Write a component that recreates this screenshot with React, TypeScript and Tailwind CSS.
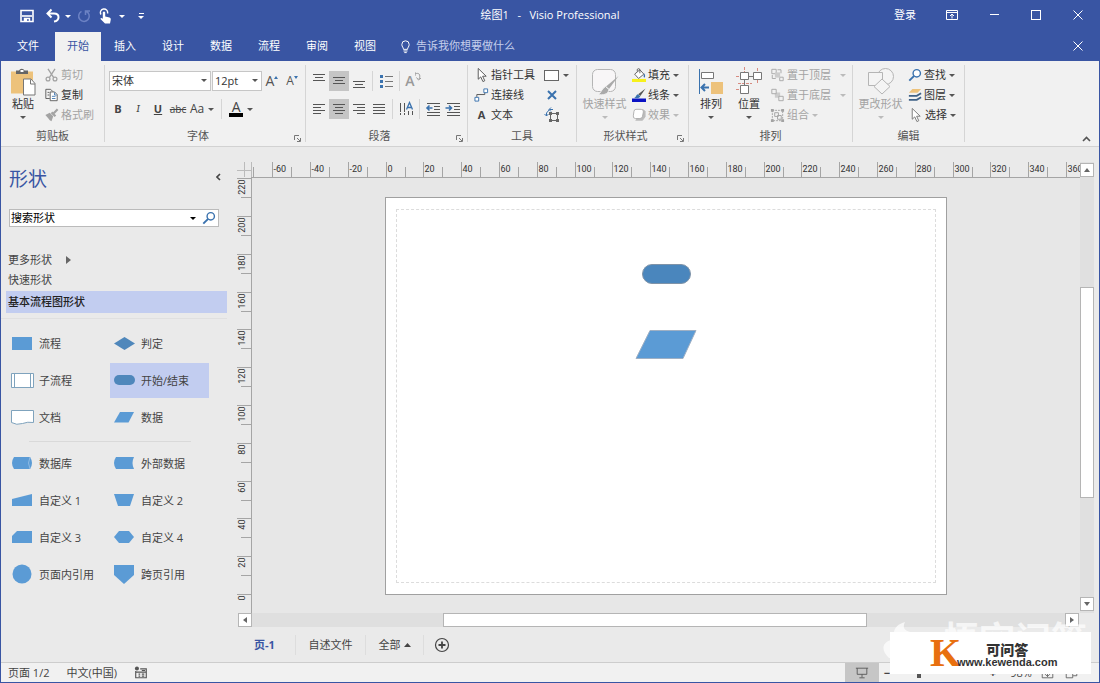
import type { ReactNode } from "react";

const tabs = ["插入", "设计", "数据", "流程", "审阅", "视图"];

function Caret({ className = "text-[#555]" }: { className?: string }) {
  return (
    <svg viewBox="0 0 6 3" className={`w-[6px] h-[3px] shrink-0 ${className}`}>
      <path d="M0 0h6L3 3z" fill="currentColor" />
    </svg>
  );
}

function Icon({ children, className = "w-4 h-4" }: { children: ReactNode; className?: string }) {
  return (
    <svg viewBox="0 0 16 16" fill="none" stroke="currentColor" className={`shrink-0 ${className}`}>
      {children}
    </svg>
  );
}

function CloseIcon() {
  return (
    <svg viewBox="0 0 10 10" className="w-[10px] h-[10px]" stroke="currentColor" fill="none">
      <path d="M0.5 0.5l9 9M9.5 0.5l-9 9" />
    </svg>
  );
}

function TitleBar() {
  return (
    <header className="grid grid-cols-[1fr_auto_1fr] items-center h-8 text-white">
      <div className="flex items-center pl-[18px]">
        <button aria-label="保存" className="w-4">
          <Icon>
            <path d="M2 2.5h12v11H2z" strokeWidth="1.6" />
            <path d="M3 8h10" strokeWidth="1.6" />
            <path d="M5.5 13v-2.500h5V13" strokeWidth="1.4" />
            <path d="M6 11h2v2H6z" fill="currentColor" stroke="none" />
          </Icon>
        </button>
        <button aria-label="撤消" className="flex items-center gap-1 ml-[10px]">
          <Icon>
            <path d="M6.5 1.5L2.5 5.500l4 4M3 5.500h6c6 0 6 7 0 8" strokeWidth="2" />
          </Icon>
          <Caret className="text-white" />
        </button>
        <button aria-label="恢复" className="ml-[5px] text-[#6c82c4]">
          <Icon>
            <path d="M10 3.2a5.3 5.3 0 1 1-4.5.2M9.5 7V3H14" strokeWidth="1.5" />
          </Icon>
        </button>
        <button aria-label="触摸/鼠标模式" className="flex items-center gap-[6px] ml-[5px]">
          <Icon>
            <path d="M4 6.500a3.600 3.600 0 1 1 6.500-1" strokeWidth="1.4" />
            <path d="M5.800 4.200q1.200-1.200 2.400 0V8.500l4.300 1q1.500.5 1.300 2L13 15.500H8L3.500 11q0-1.800 2.300-.3z" fill="currentColor" stroke="none" />
          </Icon>
          <Caret className="text-white" />
        </button>
        <button aria-label="自定义快速访问工具栏" className="flex flex-col items-center gap-[2px] ml-[13px]">
          <span className="w-[5px] h-px bg-white" />
          <Caret className="text-white" />
        </button>
      </div>
      <h1 className="pb-[3px] whitespace-pre">绘图1   -   Visio Professional</h1>
      <div className="flex justify-end items-center h-full pb-[3px]">
        <button className="px-[15px]">登录</button>
        <button aria-label="功能区显示选项" className="w-[42px] h-full flex justify-center items-center">
          <svg viewBox="0 0 12 10" className="w-3 h-[10px]" fill="none" stroke="currentColor">
            <path d="M0.500.5h11v9H.5zM.5 2.500h11M6 8.500V4M4 6l2-2 2 2" />
          </svg>
        </button>
        <button aria-label="最小化" className="w-[42px] h-full flex justify-center items-center">
          <span className="w-[9px] h-px bg-white" />
        </button>
        <button aria-label="最大化" className="w-[42px] h-full flex justify-center items-center">
          <span className="w-[10px] h-[10px] border border-white" />
        </button>
        <button aria-label="关闭" className="w-[42px] h-full flex justify-center items-center">
          <CloseIcon />
        </button>
      </div>
    </header>
  );
}

function TabBar() {
  return (
    <nav className="flex h-[29px] text-white">
      <button className="w-[54px] pb-[2px]">文件</button>
      <button className="w-[46px] pb-[2px] bg-[#f1f1f1] text-[#3955a3]">开始</button>
      {tabs.map((tab) => (
        <button key={tab} className="w-12 pb-[2px]">
          {tab}
        </button>
      ))}
      <button className="flex items-center gap-1 pl-[10px] pb-px text-[#c5cfec]">
        <Icon className="w-[13px] h-[15px] text-white">
          <path d="M5.500 11.500C5.500 9 3.500 8.500 3.500 5.500a4.500 4.500 0 0 1 9 0c0 3-2 3.500-2 6zM5.500 13.500h5M6.500 15.500h3" strokeWidth="1.200" />
        </Icon>
        告诉我你想要做什么
      </button>
      <button aria-label="关闭窗口" className="w-[42px] ml-auto pb-[2px] flex justify-center items-center">
        <CloseIcon />
      </button>
    </nav>
  );
}

function Group({ label, launcher, width, children }: { label: string; launcher?: boolean; width: string; children: ReactNode }) {
  return (
    <>
      <section className={`flex flex-col shrink-0 ${width}`}>
        <div className="h-[61px]">{children}</div>
        <div className="flex items-center h-5">
          <h2 className="flex-1 text-center text-[#555]">{label}</h2>
          {launcher && (
            <button aria-label={`${label}设置`} className="w-[14px] pt-[5px] pl-[3px] text-[#777]">
              <svg viewBox="0 0 7 7" className="w-[7px] h-[7px]" fill="none" stroke="currentColor">
                <path d="M.5 5V.500H5M3 3l3 3M6.500 3v3.500H3" />
              </svg>
            </button>
          )}
        </div>
      </section>
      <div className="w-px h-[77px] shrink-0 bg-[#d5d5d5]" />
    </>
  );
}

function Divider() {
  return <span className="w-px h-5 mx-[3px] bg-[#d5d5d5]" />;
}

function Tool({ icon, label, caret, disabled }: { icon: ReactNode; label: string; caret?: boolean; disabled?: boolean }) {
  return (
    <button className={`flex items-center h-5 whitespace-nowrap ${disabled ? "text-[#a3a3a3]" : "text-[#333]"}`}>
      {icon}
      <span className="ml-[2px]">{label}</span>
      {caret && <Caret className={disabled ? "ml-[3px] text-[#bbb]" : "ml-[3px] text-[#555]"} />}
    </button>
  );
}

function BigTool({ icon, label, disabled }: { icon: ReactNode; label: string; disabled?: boolean }) {
  return (
    <button className={`flex flex-col items-center shrink-0 whitespace-nowrap ${disabled ? "text-[#a3a3a3]" : "text-[#333]"}`}>
      {icon}
      <span className="h-4 leading-4">{label}</span>
      <Caret className={disabled ? "mt-1 text-[#bbb]" : "mt-1 text-[#555]"} />
    </button>
  );
}

function IconButton({ label, active, children }: { label: string; active?: boolean; children: ReactNode }) {
  return (
    <button aria-label={label} className={`flex justify-center items-center w-5 h-5 text-[#555] ${active ? "bg-[#c5c5c5]" : ""}`}>
      {children}
    </button>
  );
}

function Lines({ d }: { d: string }) {
  return (
    <svg viewBox="0 0 14 16" className="w-[14px] h-4" stroke="currentColor" fill="none">
      <path d={d} />
    </svg>
  );
}

function Pointer({ className = "text-[#555]" }: { className?: string }) {
  return (
    <Icon className={`w-[15px] h-4 ${className}`}>
      <path d="M4.500 1v11.500l2.700-2.500 2.300 5 2-.9-2.300-4.800h3.800z" fill="#fff" />
    </Icon>
  );
}

function Search() {
  return (
    <Icon className="w-[14px] h-[14px] text-[#3a72ae]">
      <circle cx="10" cy="6" r="4.200" strokeWidth="1.600" fill="#fff" />
      <path d="M7 9l-5.500 5.500" strokeWidth="2.200" />
    </Icon>
  );
}

function ClipboardGroup() {
  return (
    <Group label="剪贴板" width="w-[103px]">
      <div className="flex">
        <div className="flex justify-center w-[42px] pt-[2px] pl-[2px]">
          <BigTool
            label="粘贴"
            icon={
              <svg viewBox="0 0 26 28" className="w-[26px] h-[29px]">
                <path d="M1 4h22v22H1z" fill="#edc27b" />
                <path d="M6 6.500V3h3a3 3 0 0 1 5.500 0H18v3.500z" fill="#666" />
                <path d="M10.500 2.500h3v2h-3z" fill="#fff" />
                <path d="M13.500 11.500h7.500l4 4.500v11.500H13.500z" fill="#fff" stroke="#777" />
                <path d="M20.500 12v4.500H25" fill="none" stroke="#777" />
              </svg>
            }
          />
        </div>
        <div className="flex flex-col items-start pl-px">
          <Tool
            disabled
            label="剪切"
            icon={
              <Icon className="w-[15px] h-[14px]">
                <path d="M4 1l6.500 10M12 1L5.500 11" strokeWidth="1.500" />
                <circle cx="4" cy="12.500" r="2.200" strokeWidth="1.400" />
                <circle cx="12" cy="12.500" r="2.200" strokeWidth="1.400" />
              </Icon>
            }
          />
          <Tool
            label="复制"
            icon={
              <Icon className="w-[15px] h-[14px] text-[#555]">
                <path d="M6 12H1.500V1.500H7L9.500 4M3.500 5h2M3.500 8h2" />
                <path d="M6.500 4.500h5l3 3v7h-8z" fill="#fff" />
                <path d="M11.500 5v3H14M8.500 9.500h4M8.500 12h4" stroke="#3a72ae" />
              </Icon>
            }
          />
          <Tool
            disabled
            label="格式刷"
            icon={
              <Icon className="w-[15px] h-[14px]">
                <path d="M1 8l5-2.500 4 4L8 15l-2-1-2-2.500z" fill="currentColor" stroke="none" />
                <path d="M8 5l4.500 4.500M10 6.500l5-5" strokeWidth="2.500" />
              </Icon>
            }
          />
        </div>
      </div>
    </Group>
  );
}

function Combo({ label, value, width }: { label: string; value: string; width: string }) {
  return (
    <div className={`relative h-5 ${width}`}>
      <select aria-label={label} className="appearance-none w-full h-full pl-[2px] bg-white border border-[#c6c6c6] text-[#333]">
        <option>{value}</option>
      </select>
      <span className="absolute right-1 top-2 pointer-events-none">
        <Caret />
      </span>
    </div>
  );
}

function FontGroup() {
  return (
    <Group label="字体" launcher width="w-[200px]">
      <div className="flex items-center pt-[6px] pl-1">
        <Combo label="字体" value="宋体" width="w-[102px]" />
        <Combo label="字号" value="12pt" width="ml-px w-[50px]" />
        <IconButton label="增大字号">
          <span className="text-sm leading-5">A</span>
          <svg viewBox="0 0 4 3" className="w-1 h-[3px] mb-2">
            <path d="M0 3h4L2 0z" fill="#3a72ae" />
          </svg>
        </IconButton>
        <IconButton label="减小字号">
          <span className="text-xs leading-5">A</span>
          <svg viewBox="0 0 4 3" className="w-1 h-[3px] mb-2">
            <path d="M0 0h4L2 3z" fill="#3a72ae" />
          </svg>
        </IconButton>
      </div>
      <div className="flex items-center mt-2 pl-[3px] text-[#444]">
        <button className="w-5 font-bold">B</button>
        <button className="w-5 font-serif italic">I</button>
        <button className="w-5 font-bold underline">U</button>
        <button className="w-5 text-[10px] line-through">abc</button>
        <button className="flex items-center gap-1 pl-[2px] text-xs leading-5">
          Aa <Caret />
        </button>
        <span className="w-px h-5 mx-[7px] bg-[#d5d5d5]" />
        <button aria-label="字体颜色" className="flex items-center gap-1">
          <span className="flex flex-col items-center w-[14px]">
            <span className="h-3 text-sm leading-3">A</span>
            <span className="w-full h-1 bg-black" />
          </span>
          <Caret />
        </button>
      </div>
    </Group>
  );
}

function ParagraphGroup() {
  return (
    <Group label="段落" launcher width="w-[161px]">
      <div className="flex items-center pt-[6px] pl-[3px]">
        <IconButton label="顶端对齐">
          <Lines d="M1 1.500h12M3 4.500h8M1 7.500h12" />
        </IconButton>
        <IconButton label="中部对齐" active>
          <Lines d="M1 4.500h12M3 7.500h8M1 10.500h12" />
        </IconButton>
        <IconButton label="底端对齐">
          <Lines d="M1 8.500h12M3 11.500h8M1 14.500h12" />
        </IconButton>
        <Divider />
        <IconButton label="项目符号">
          <svg viewBox="0 0 14 16" className="w-[14px] h-4" fill="none">
            <path d="M6 3.500h8M6 8.500h8M6 13.500h8" stroke="#777" />
            <path d="M1 2h3v3H1zM1 7h3v3H1zM1 12h3v3H1z" fill="#3a72ae" />
          </svg>
        </IconButton>
        <Divider />
        <IconButton label="旋转文本">
          <span className="text-sm font-semibold text-[#999]">A</span>
          <svg viewBox="0 0 6 10" className="w-[6px] h-[10px] mb-2 text-[#999]" fill="none" stroke="currentColor">
            <path d="M0 2c4-2 6 1 4 5M1.500 5.500L3.500 8 6 6M0 0v4" />
          </svg>
        </IconButton>
      </div>
      <div className="flex items-center mt-2 pl-[3px]">
        <IconButton label="左对齐">
          <Lines d="M1 3.500h12M1 6.500h8M1 9.500h12M1 12.500h8" />
        </IconButton>
        <IconButton label="居中" active>
          <Lines d="M1 3.500h12M3 6.500h8M1 9.500h12M3 12.500h8" />
        </IconButton>
        <IconButton label="右对齐">
          <Lines d="M1 3.500h12M5 6.500h8M1 9.500h12M5 12.500h8" />
        </IconButton>
        <IconButton label="两端对齐">
          <Lines d="M1 3.500h12M1 6.500h12M1 9.500h12M1 12.500h12" />
        </IconButton>
        <Divider />
        <IconButton label="文字方向">
          <svg viewBox="0 0 14 16" className="w-[14px] h-4" fill="none" stroke="currentColor">
            <path d="M1.500 2v12M5.500 2v12M9.500 10v4M13.500 10v4" strokeDasharray="9 1 4" />
            <path d="M7.500 8.500l3-7 3 7M8.500 6.500h4" stroke="#3a72ae" strokeWidth="1.300" />
          </svg>
        </IconButton>
        <Divider />
        <IconButton label="减少缩进量">
          <svg viewBox="0 0 16 14" className="w-4 h-[14px]" fill="none" stroke="currentColor">
            <path d="M2 1.500h13M9 4.500h6M9 7.500h6M2 10.500h13M2 13.500h13" />
            <path d="M7.500 6H2M4.500 3.500L2 6l2.500 2.500" stroke="#3a72ae" strokeWidth="1.600" />
          </svg>
        </IconButton>
        <IconButton label="增加缩进量">
          <svg viewBox="0 0 16 14" className="w-4 h-[14px]" fill="none" stroke="currentColor">
            <path d="M2 1.500h13M9 4.500h6M9 7.500h6M2 10.500h13M2 13.500h13" />
            <path d="M0.500 6H6M4 3.500L6.500 6 4 8.500" stroke="#3a72ae" strokeWidth="1.600" />
          </svg>
        </IconButton>
      </div>
    </Group>
  );
}

function ToolsGroup() {
  return (
    <Group label="工具" width="w-[108px]">
      <div className="flex">
        <div className="flex flex-col items-start w-[76px] pl-[6px]">
          <Tool label="指针工具" icon={<Pointer />} />
          <Tool
            label="连接线"
            icon={
              <Icon className="w-[15px] h-4 text-[#555]">
                <path d="M3 10V7.500h8.500V5" />
                <path d="M1 10.500h4v4H1zM10.500 1.500h4v4h-4z" stroke="#3a72ae" fill="#fff" />
              </Icon>
            }
          />
          <Tool label="文本" icon={<span className="w-[15px] font-bold text-[#444]">A</span>} />
        </div>
        <div className="flex flex-col items-start">
          <button aria-label="矩形" className="flex items-center gap-1 h-5">
            <span className="w-[15px] h-[11px] bg-white border border-[#666]" />
            <Caret />
          </button>
          <button aria-label="连接点" className="flex justify-center items-center w-[15px] h-5 text-[#3a72ae]">
            <svg viewBox="0 0 10 10" className="w-[10px] h-[10px]" fill="none" stroke="currentColor" strokeWidth="2">
              <path d="M1 1l8 8M9 1L1 9" />
            </svg>
          </button>
          <button aria-label="文本块" className="w-4 h-5 text-[#666]">
            <Icon>
              <path d="M6.500 6.500h7v7h-7z" />
              <path d="M5 5h3v3H5zM12 5h3v3h-3zM5 12h3v3H5zM12 12h3v3h-3z" fill="currentColor" stroke="none" />
              <path d="M9 2.500H5.500L2.500 6v3M7 .5L5 2.500l2 2M.5 7l2 2 2-2" stroke="#3a72ae" />
            </Icon>
          </button>
        </div>
      </div>
    </Group>
  );
}

function ShapeStyleGroup() {
  return (
    <Group label="形状样式" launcher width="w-[111px]">
      <div className="flex">
        <div className="flex justify-center w-[55px] pt-[2px]">
          <BigTool
            disabled
            label="快速样式"
            icon={
              <svg viewBox="0 0 28 29" className="w-7 h-[29px]" fill="none">
                <rect x="1.500" y="2.500" width="23" height="22" rx="5" fill="#f8f6f7" stroke="#b5b5b5" />
                <path d="M27.500 9L18 22l-3-2.500z" fill="#aaa" />
                <path d="M14.500 19.500l3.500 3c-1 5-6 6-11 5 3-1 3.500-6 7.500-8z" fill="#aaa" stroke="#f1f1f1" />
              </svg>
            }
          />
        </div>
        <div className="flex flex-col items-start">
          <Tool
            caret
            label="填充"
            icon={
              <Icon className="w-[14px] h-4 text-[#555]">
                <path d="M0 12.500h16v3.500H0z" fill="#f7f11c" stroke="none" />
                <path d="M3 7l6-5 4.500 5-6 5z" fill="#fff" />
                <path d="M6 4V1.500q1.500-1.500 3 0V6" />
                <path d="M14 6q2 4 0 5-1.500-1 0-5z" fill="#3a72ae" stroke="none" />
              </Icon>
            }
          />
          <Tool
            caret
            label="线条"
            icon={
              <Icon className="w-[14px] h-4">
                <path d="M0 12h16v4H0z" fill="#0a12c4" stroke="none" />
                <path d="M15.500 0.500L9.500 9 7 7z" fill="#555" stroke="none" />
                <path d="M6.500 7L9.500 9.500c-1 2.500-4 2.500-7 2 2-1 2-3.500 4-4.500z" fill="#3a72ae" stroke="none" />
              </Icon>
            }
          />
          <Tool
            disabled
            caret
            label="效果"
            icon={
              <Icon className="w-[14px] h-[14px]">
                <path d="M4 14h8l3-4V4q-1-2-3-2" fill="#bbb" stroke="#bbb" />
                <path d="M4.500 1.500h6q3 0 2.500 3l-1 5q-.5 2.500-3 2.500H4q-3 0-2.500-3l.7-5q.3-2.500 2.300-2.500z" fill="#fff" stroke="#aaa" />
              </Icon>
            }
          />
        </div>
      </div>
    </Group>
  );
}

function ArrangeGroup() {
  return (
    <Group label="排列" width="w-[163px]">
      <div className="flex">
        <div className="flex justify-center w-11 pt-[2px]">
          <BigTool
            label="排列"
            icon={
              <svg viewBox="0 0 24 29" className="w-6 h-[29px]" fill="none">
                <path d="M.5 2v25" stroke="#3a72ae" />
                <path d="M2.500 5.500h12v6h-12z" fill="#fff" stroke="#777" />
                <path d="M12 15h12v12H12z" fill="#edc27b" />
                <path d="M10 20.500H3M6 17l-3.500 3.500L6 24" stroke="#3a72ae" strokeWidth="2" />
              </svg>
            }
          />
        </div>
        <div className="flex justify-center w-8 pt-[2px]">
          <BigTool
            label="位置"
            icon={
              <svg viewBox="0 0 26 29" className="w-[26px] h-[29px]" fill="none">
                <path d="M8.500 0v28M21.500 1v16M0 9.500h26M0 22.500h8M2 16.500h14" stroke="#d78b80" strokeDasharray="3 1" />
                <path d="M12 9.500h6M8.500 13v6" stroke="#777" />
                <path d="M4.500 5.500h8v7h-8zM17.500 5.500h8v7h-8zM4.500 18.500h8v8h-8z" fill="#fff" stroke="#777" />
              </svg>
            }
          />
        </div>
        <div className="flex flex-col pl-[5px]">
          <div className="flex items-center justify-between w-[76px]">
            <Tool
              disabled
              label="置于顶层"
              icon={
                <Icon className="w-[15px] h-[14px]">
                  <path d="M1.500 1.500h5v5h-5zM10.500 10.500h4v4h-4zM8 2h4v4M2 8v4h4" />
                  <path d="M5 5h6v6H5z" fill="#ccc" stroke="none" />
                </Icon>
              }
            />
            <Caret className="text-[#bbb]" />
          </div>
          <div className="flex items-center justify-between w-[76px]">
            <Tool
              disabled
              label="置于底层"
              icon={
                <Icon className="w-[15px] h-[14px]">
                  <path d="M6 5h5v6H5V7z" fill="#ccc" stroke="none" />
                  <path d="M1.500 1.500h5v5h-5zM9.500 9.500h5v5h-5z" fill="#f1f1f1" />
                </Icon>
              }
            />
            <Caret className="text-[#bbb]" />
          </div>
          <Tool
            disabled
            caret
            label="组合"
            icon={
              <Icon className="w-[15px] h-[15px]">
                <path d="M2.500 2.500h11v11h-11z" strokeDasharray="2 1" />
                <path d="M5 5h4v4H5zM8 8h4v4H8z" />
                <path d="M1 1h3v3H1zM12 1h3v3h-3zM1 12h3v3H1zM12 12h3v3h-3z" fill="currentColor" stroke="none" />
              </Icon>
            }
          />
        </div>
      </div>
    </Group>
  );
}

function EditGroup() {
  return (
    <Group label="编辑" width="w-[111px]">
      <div className="flex">
        <div className="flex justify-center w-[55px] pt-[2px]">
          <BigTool
            disabled
            label="更改形状"
            icon={
              <svg viewBox="0 0 28 29" className="w-7 h-[29px]" fill="#f4f4f4" stroke="#b5b5b5">
                <circle cx="18.500" cy="9.500" r="8" />
                <path d="M1.500 5.500h14v13h-14z" />
                <path d="M15 12l8 7.500-8 7.500-8-7.500z" />
              </svg>
            }
          />
        </div>
        <div className="flex flex-col items-start">
          <Tool caret label="查找" icon={<Search />} />
          <Tool
            caret
            label="图层"
            icon={
              <Icon className="w-[14px] h-[14px]">
                <path d="M5 1h10l-4 4.500H1z" fill="#edc27b" stroke="none" />
                <path d="M1 9h9l5-3M1 13.500h9l5-3" stroke="#3f6287" strokeWidth="2" />
              </Icon>
            }
          />
          <Tool caret label="选择" icon={<Pointer className="text-[#777]" />} />
        </div>
      </div>
    </Group>
  );
}

function Ribbon() {
  return (
    <div className="flex pt-1 bg-[#f1f1f1] border-b border-[#d2d2d2]">
      <ClipboardGroup />
      <FontGroup />
      <ParagraphGroup />
      <ToolsGroup />
      <ShapeStyleGroup />
      <ArrangeGroup />
      <EditGroup />
      <button aria-label="折叠功能区" className="ml-auto mr-2 self-end pb-1 text-[#555]">
        <svg viewBox="0 0 9 6" className="w-[9px] h-[6px]" fill="none" stroke="currentColor" strokeWidth="1.600">
          <path d="M1 5l3.500-3.500L8 5" />
        </svg>
      </button>
    </div>
  );
}

const basicShapes = [
  { name: "流程", art: <path d="M1 4h20v13H1z" fill="#5b9bd5" /> },
  { name: "判定", art: <path d="M1 10.500L11.500 4 22 10.500 11.500 17z" fill="#4f87bb" /> },
  { name: "子流程", art: <path d="M0.500 3.500h22v14H.5zM3.500 3.500v14M19.500 3.500v14" fill="#fff" stroke="#7fa3bd" /> },
  { name: "开始/结束", art: <rect x="1" y="5" width="21" height="10" rx="5" fill="#4f87bb" />, selected: true },
  { name: "文档", art: <path d="M0.500 3.500h22v12q-6-1-11 1-6 2-11-1z" fill="#fff" stroke="#7fa3bd" /> },
  { name: "数据", art: <path d="M7 5h14l-5.500 10.500H1z" fill="#5b9bd5" /> },
];

const moreShapes = [
  {
    name: "数据库",
    art: (
      <>
        <path d="M3 4h16q4 6 0 12H3Q-1 10 3 4z" fill="#5b9bd5" />
        <path d="M19 4q-3 6 0 12" fill="none" stroke="#8fbbe4" />
      </>
    ),
  },
  { name: "外部数据", art: <path d="M3 4h18q-3 6 0 12H3Q-1 10 3 4z" fill="#5b9bd5" /> },
  { name: "自定义 1", art: <path d="M1 9l20-5v12H1z" fill="#5b9bd5" /> },
  { name: "自定义 2", art: <path d="M1 4h20l-4 12H5z" fill="#5b9bd5" /> },
  { name: "自定义 3", art: <path d="M6 4h15v12H1V9z" fill="#5b9bd5" /> },
  { name: "自定义 4", art: <path d="M6 4h10l5 6-5 6H6l-5-6z" fill="#5b9bd5" /> },
  { name: "页面内引用", art: <circle cx="11" cy="10" r="9.500" fill="#5b9bd5" /> },
  { name: "跨页引用", art: <path d="M1 1h20v10l-10 9-10-9z" fill="#5b9bd5" /> },
];

function ShapeGrid({ items }: { items: { name: string; art: ReactNode; selected?: boolean }[] }) {
  return (
    <div className="grid grid-cols-[102px_99px] pl-[7px]">
      {items.map((item) => (
        <button
          key={item.name}
          className={`flex items-center gap-[5px] h-[35px] my-px pl-[3px] whitespace-nowrap ${item.selected ? "bg-[#c2cdf0]" : ""}`}
        >
          <svg viewBox="0 0 23 21" className="w-[23px] h-[21px] shrink-0">
            {item.art}
          </svg>
          {item.name}
        </button>
      ))}
    </div>
  );
}

function ShapesPanel() {
  return (
    <aside className="w-[226px] shrink-0 pt-[18px]">
      <div className="flex items-center justify-between h-7 pl-2 pr-[6px]">
        <h2 className="text-[19px] text-[#3955a3]">形状</h2>
        <button aria-label="折叠形状窗口" className="pb-1 text-[#444]">
          <svg viewBox="0 0 5 8" className="w-[5px] h-2" fill="none" stroke="currentColor" strokeWidth="1.600">
            <path d="M4 1L1 4l3 3" />
          </svg>
        </button>
      </div>
      <div className="flex items-center h-[18px] mt-4 mx-2 bg-white border border-[#bbb]">
        <input aria-label="搜索形状" defaultValue="搜索形状" className="flex-1 min-w-0 pl-px bg-transparent text-black outline-none" />
        <Caret className="text-black" />
        <button aria-label="搜索" className="ml-[6px] mr-[2px]">
          <Search />
        </button>
      </div>
      <div className="flex flex-col mt-[23px]">
        <button className="flex items-center gap-[14px] h-5 pl-[7px]">
          更多形状
          <svg viewBox="0 0 5 8" className="w-[5px] h-2">
            <path d="M0 0l5 4-5 4z" fill="#666" />
          </svg>
        </button>
        <button className="h-5 pl-[7px] text-left">快速形状</button>
        <button className="h-[22px] mt-px ml-[5px] pl-[2px] text-left font-medium text-[#222] bg-[#c2cdf0]">基本流程图形状</button>
      </div>
      <div className="mt-[5px] mb-[6px] border-t border-[#e0e0e0]" />
      <ShapeGrid items={basicShapes} />
      <div className="mt-[5px] mb-[3px] ml-7 mr-9 border-t border-[#d9d9d9]" />
      <ShapeGrid items={moreShapes} />
    </aside>
  );
}

// one major tick = 20 mm
const STEP = 37.8;

function HorizontalRuler() {
  const marks = Array.from({ length: 23 }, (_, i) => i - 4);
  return (
    <svg className="block w-full h-4 font-[Roboto]" fill="#333" fontSize="9">
      {marks.map((n) => {
        const x = Math.round(133.5 + n * STEP) + 0.5;
        return (
          <g key={n}>
            <path d={`M${x} 0v15M${x + 19} 5v10`} stroke="#a5a5a5" />
            {n > -4 && (
              <text x={x + 1} y="10">
                {n * 20}
              </text>
            )}
          </g>
        );
      })}
      <path d="M0 15.500h4000" stroke="#a5a5a5" />
    </svg>
  );
}

function VerticalRuler() {
  const marks = Array.from({ length: 12 }, (_, i) => i);
  return (
    <svg className="block w-full flex-1 font-[Roboto]" fill="#333" fontSize="9">
      {marks.map((n) => {
        const y = Math.round(417 - n * STEP) + 0.5;
        return (
          <g key={n}>
            <path d={`M0 ${y}h15`} stroke="#a5a5a5" />
            {n > 0 && <path d={`M4 ${y + 19}h11`} stroke="#a5a5a5" />}
            <text transform={`translate(8 ${y + 1}) rotate(-90)`} textAnchor="end">
              {n * 20}
            </text>
          </g>
        );
      })}
      <path d="M14.500 0v4000" stroke="#a5a5a5" />
    </svg>
  );
}

function ScrollButton({ label, d }: { label: string; d: string }) {
  return (
    <button aria-label={label} className="flex justify-center items-center w-[14px] h-[14px] shrink-0 bg-white border border-[#b5b5b5]">
      <svg viewBox="0 0 6 6" className="w-[6px] h-[6px]">
        <path d={d} fill="#666" />
      </svg>
    </button>
  );
}

function Workspace() {
  return (
    <main className="flex flex-col flex-1 min-w-0 pt-[15px] pl-[10px]">
      <div className="flex flex-1 pr-[5px]">
        <div className="flex flex-col w-[15px] shrink-0">
          <svg viewBox="0 0 15 15" className="w-[15px] h-[15px]" stroke="#bbb" fill="none">
            <path d="M7.500 0v15M0 8.500h15M14.500 0v15" />
          </svg>
          <VerticalRuler />
        </div>
        <div className="flex flex-col flex-1 min-w-0">
          <HorizontalRuler />
          <div className="flex-1 pt-[19px] pl-[133px] pb-[18px] overflow-hidden bg-[#e7e7e7]">
            <div className="w-[562px] py-[11px] px-[10px] bg-white border border-[#a0a0a0]">
              <div className="h-[374px] border border-dashed border-[#dcdcdc]">
                <svg viewBox="0 0 538 372" className="block w-full h-full" stroke="#7f93a8">
                  <rect x="245.500" y="54.500" width="48" height="19" rx="9.500" fill="#4a86bd" />
                  <path d="M253 120.500h46l-13 28h-47z" fill="#5b9bd5" stroke="#9fb0c4" />
                </svg>
              </div>
            </div>
          </div>
        </div>
        <div className="flex flex-col w-[14px] shrink-0 pt-px pb-[2px] bg-[#e0e0e0]">
          <ScrollButton label="向上滚动" d="M0 5h6L3 1z" />
          <div className="flex-[111]" />
          <div className="flex-[210] bg-white border border-[#b5b5b5]" />
          <div className="flex-[99]" />
          <ScrollButton label="向下滚动" d="M0 1h6L3 5z" />
        </div>
      </div>
      <div className="flex h-[14px] ml-px mr-5 bg-[#dfdfdf]">
        <ScrollButton label="向左滚动" d="M5 0v6L1 3z" />
        <div className="flex-[191]" />
        <div className="flex-[424] bg-white border border-[#b5b5b5]" />
        <div className="flex-[198]" />
        <ScrollButton label="向右滚动" d="M1 0v6l4-3z" />
      </div>
      <div className="flex items-center h-[35px] pl-[17px]">
        <button className="w-[41px] text-left font-bold text-[#3955a3]">页-1</button>
        <button className="w-[70px] h-5 border-l border-[#ddd]">自述文件</button>
        <button className="flex justify-center items-center gap-[3px] w-[59px] h-5 border-x border-[#ddd]">
          全部
          <svg viewBox="0 0 7 4" className="w-[7px] h-1">
            <path d="M0 4h7L3.500 0z" fill="#444" />
          </svg>
        </button>
        <button aria-label="插入页" className="ml-[10px] text-[#444]">
          <Icon>
            <circle cx="8" cy="8" r="6.500" strokeWidth="1.200" />
            <path d="M8 4.500v7M4.500 8h7" strokeWidth="1.800" />
          </Icon>
        </button>
      </div>
    </main>
  );
}

function StatusBar() {
  return (
    <footer className="flex items-center h-5 pl-[7px] bg-[#f1f1f1] border-t border-[#cdcdcd]">
      <span>页面 1/2</span>
      <span className="ml-[17px]">中文(中国)</span>
      <button aria-label="宏" className="ml-[17px] text-[#555]">
        <Icon className="w-[14px] h-[13px]">
          <path d="M1.500 6v8.500h13v-11H7M2 7.500h12M5 10h2M9 10h3M5 12.500h2M9 12.500h3M9 5.500h4" strokeWidth="1.400" />
          <circle cx="3" cy="3" r="2.500" fill="currentColor" stroke="none" />
        </Icon>
      </button>
      <button aria-label="演示模式" className="flex justify-center items-center w-[34px] h-full ml-auto bg-[#c6c6c6] text-[#555]">
        <Icon className="w-[14px] h-[14px]">
          <path d="M1 2.500h14M2.500 2.500v7h11v-7M8 9.500V13M5 13.500h6" />
        </Icon>
      </button>
      <button aria-label="缩小" className="w-4 font-bold">
        −
      </button>
      <input
        type="range"
        aria-label="缩放"
        defaultValue={25}
        className="appearance-none w-[90px] h-px bg-[#999] [&::-webkit-slider-thumb]:appearance-none [&::-webkit-slider-thumb]:w-1 [&::-webkit-slider-thumb]:h-[10px] [&::-webkit-slider-thumb]:bg-[#555]"
      />
      <button aria-label="放大" className="w-4 font-bold">
        +
      </button>
      <span className="w-10 text-center">98%</span>
      <button aria-label="适应窗口" className="w-6 text-[#555]">
        <Icon className="w-[13px] h-[13px]">
          <path d="M1.500 2.500h13v12h-13zM8 4v9M5 10l3 3 3-3" />
        </Icon>
      </button>
      <button aria-label="切换窗口" className="w-[34px] text-[#555]">
        <Icon className="w-[13px] h-[13px]">
          <path d="M1.500 5.500h8v9h-8zM5 5V1.500h9.500V12H10" />
        </Icon>
      </button>
    </footer>
  );
}

function Watermark() {
  return (
    <div className="absolute right-[9px] bottom-[8px] pointer-events-none">
      <div className="absolute right-1 bottom-[14px] flex items-center gap-[10px] text-white/70">
        <svg viewBox="0 0 50 40" className="w-[50px] h-10" fill="currentColor">
          <path d="M6 38C-5 28 2 19 12 20 8 10 14 4 22 2c-3 6 0 9 6 10 9 1 16 8 18 26H36c0-14-8-20-16-19 6 3 3 9-3 8-8-1-9 6-4 11z" />
        </svg>
        <span className="text-[36px] leading-10 font-bold whitespace-nowrap">悟空问答</span>
      </div>
      <div className="relative flex items-center w-[201px] h-[42px] pl-[40px] bg-white text-[#333]">
        <b className="w-[27px] text-[40px] leading-10 font-[Liberation_Serif] text-[#e8700f]">K</b>
        <div className="flex flex-col items-center pt-[5px]">
          <b className="text-[14px] leading-[14px] font-black">可问答</b>
          <b className="text-[11px] leading-[11px] font-[Liberation_Sans]">www.kewenda.com</b>
        </div>
      </div>
    </div>
  );
}

export default function App() {
  return (
    <div className="relative flex flex-col min-h-screen overflow-hidden border-b border-[#3955a3] bg-[#3955a3] font-['Open_Sans','Noto_Sans_CJK_SC',sans-serif] text-[11px] leading-4 text-[#444]">
      <div className="flex flex-col flex-1 px-px">
        <TitleBar />
        <TabBar />
        <Ribbon />
        <div className="flex flex-1 bg-[#eaeaea]">
          <ShapesPanel />
          <Workspace />
        </div>
        <StatusBar />
      </div>
      <Watermark />
    </div>
  );
}
